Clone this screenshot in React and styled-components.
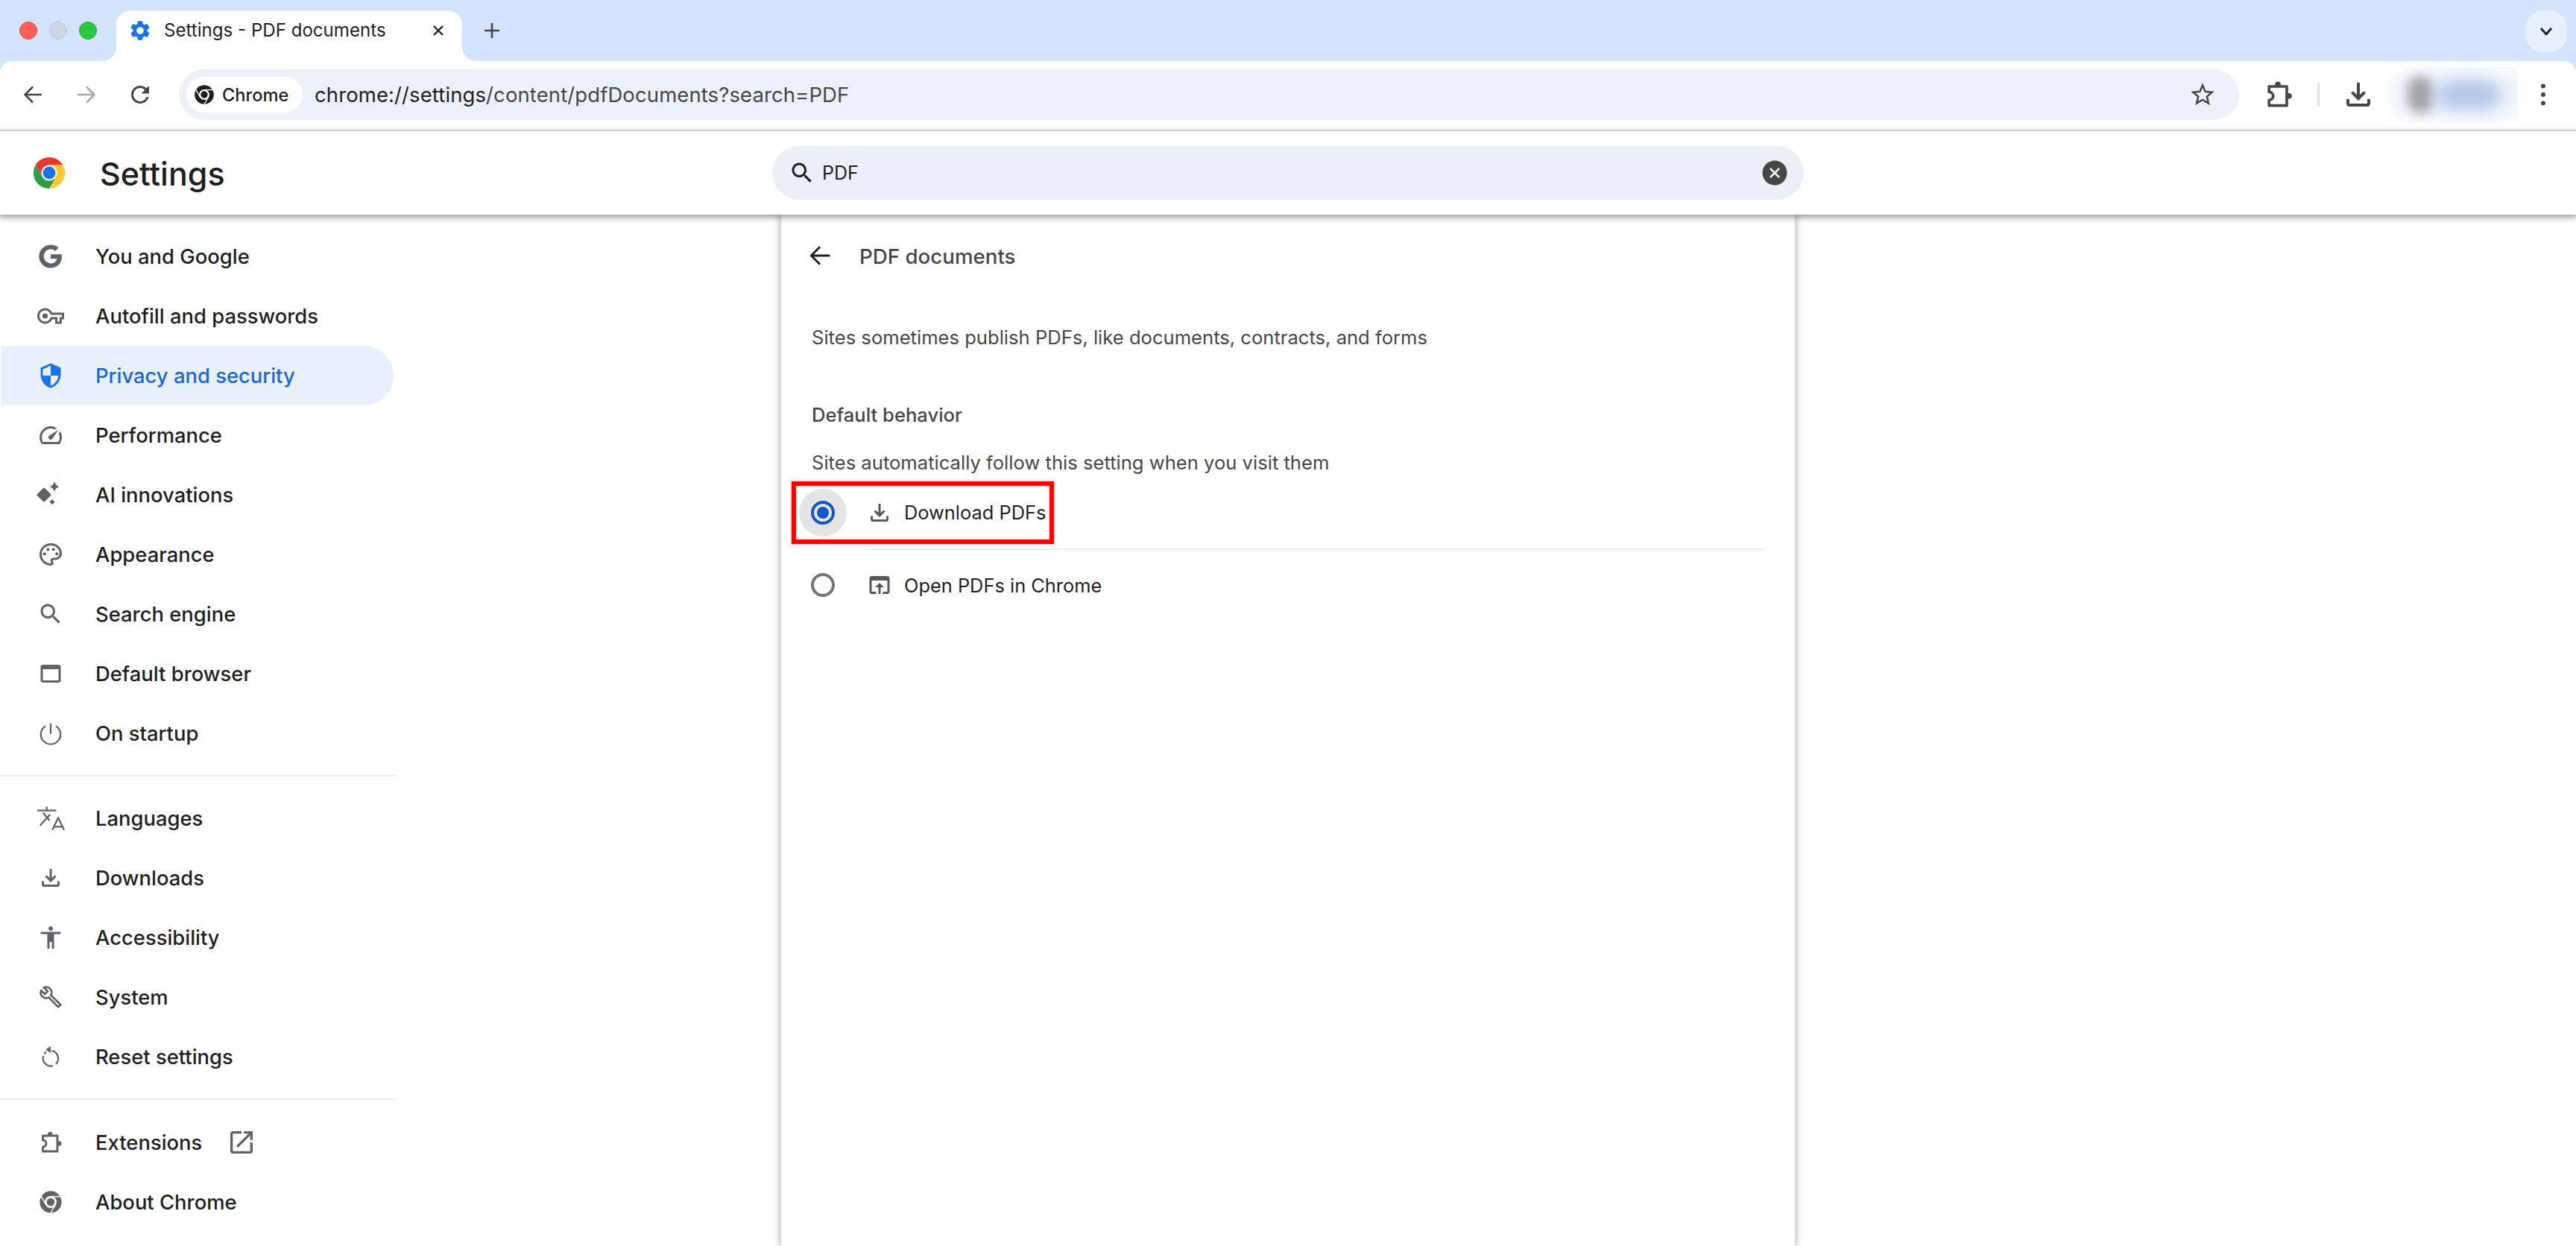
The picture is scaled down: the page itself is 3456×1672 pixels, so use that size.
import React from "react";
import styled, { createGlobalStyle } from "styled-components";

const Global = createGlobalStyle`
  html, body { margin: 0; padding: 0; height: 100%; background: #fff; overflow: hidden; }
  #root { height: 100%; }
  * { box-sizing: border-box; }
`;

const FONT = `Inter, "Liberation Sans", sans-serif`;

const Page = styled.div`
  height: 1672px; display: flex; flex-direction: column; background: #d3e3fd;
  font-family: ${FONT}; color: #1f1f1f; overflow: hidden;
`;
const TabStrip = styled.div`
  height: 82px; flex: none; display: flex; padding-top: 14px;
`;
const Lights = styled.div`
  display: flex; gap: 16px; margin-left: 26px; height: 54px; align-items: center;
`;
const Light = styled.span`
  width: 24px; height: 24px; border-radius: 50%;
  background: ${p => p.$c}; border: 1px solid ${p => p.$b};
`;
const Tab = styled.div`
  position: relative; margin-left: 26px; width: 464px; height: 68px; background: #fff;
  border-radius: 20px 20px 0 0; display: flex; align-items: flex-start; padding: 9px 20px 0 16px; color: #1f1f1f;
  &::before, &::after { content: ""; position: absolute; bottom: 0; width: 20px; height: 20px; }
  &::before { left: -20px; background: radial-gradient(circle at 0 0, transparent 20px, #fff 20.5px); }
  &::after { right: -20px; background: radial-gradient(circle at 100% 0, transparent 20px, #fff 20.5px); }
`;
const TabTitle = styled.span`
  font-size: 24.1px; line-height: 36px; margin-left: 16px; flex: 1; white-space: nowrap;
`;
const TabIconBox = styled.span`
  display: flex; align-items: center; height: 36px; color: ${p => p.$c || "#1f1f1f"};
`;
const NewTab = styled.span`
  margin-left: 22px; width: 36px; height: 54px; display: flex; align-items: center; justify-content: center; color: #474747;
`;
const TabSearch = styled.span`
  margin-left: auto; margin-right: 12px; width: 56px; height: 56px; border-radius: 24px; background: #e9f0fd;
  display: flex; align-items: center; justify-content: center; color: #1f1f1f;
`;
const Toolbar = styled.div`
  height: 94px; flex: none; background: #fff; border-radius: 16px 16px 0 0; border-bottom: 2px solid #e1e1e1;
  display: flex; align-items: center; padding: 0 20px 2px 8px;
`;
const NavBtn = styled.span`
  width: 72px; height: 48px; display: flex; align-items: center; justify-content: center;
  color: ${p => p.$c || "#474747"}; flex: none;
`;
const Omni = styled.div`
  margin-left: 16px; flex: 1; height: 68px; border-radius: 34px; background: #ecf1f9;
  display: flex; align-items: center; padding: 0 25px 0 10px; min-width: 0;
`;
const Chip = styled.div`
  width: 156px; height: 48px; border-radius: 24px; background: #fff; display: flex; align-items: center;
  padding-left: 10px; gap: 10px; font-size: 23.6px; font-weight: 500; color: #1f1f1f; flex: none;
`;
const Url = styled.div`
  margin-left: 16px; flex: 1; font-size: 27.5px; color: #474747; white-space: nowrap; letter-spacing: .1px;
  b { font-weight: 400; color: #1f1f1f; }
`;
const ToolBtn = styled.span`
  width: 48px; height: 48px; display: flex; align-items: center; justify-content: center; color: #474747; flex: none;
  margin-left: ${p => p.$ml || 0}px;
`;
const Sep = styled.span`
  width: 3px; height: 32px; border-radius: 2px; background: #d3e3fd; margin-left: 28px; flex: none;
`;
const Blurred = styled.div`
  width: 174px; height: 74px; margin-left: 16px; flex: none; display: flex; align-items: center; gap: 6px;
  padding-left: 26px; overflow: hidden;
  background: radial-gradient(ellipse at 60% 50%, #e3ecfa 0%, #f3f7fd 60%, #fdfeff 100%);
`;
const BlurFace = styled.span`
  width: 34px; height: 50px; border-radius: 16px; background: #a3a1a5; filter: blur(8px); flex: none;
`;
const BlurName = styled.span`
  width: 84px; height: 38px; border-radius: 18px; background: #b6c9e8; filter: blur(9px); flex: none;
`;
const Header = styled.header`
  height: 112px; flex: none; background: #fff; display: flex; align-items: center; position: relative; z-index: 2;
  box-shadow: 0 3px 8px 1px rgba(0,0,0,.38); padding-left: 43px;
`;
const HeaderTitle = styled.h1`
  margin: 0 0 0 45px; font-size: 43px; font-weight: 500; color: #1f1f1f; width: 902px; flex: none; line-height: 56px;
  padding-top: 2px;
`;
const SearchBox = styled.div`
  width: 1384px; height: 72px; border-radius: 36px; background: #ebeff7; display: flex; align-items: center;
  padding: 0 22px 0 22px; font-size: 25px; color: #1f1f1f; flex: none;
`;
const SearchText = styled.span`
  flex: 1; margin-left: 9px;
`;
const Main = styled.div`
  flex: 1; min-height: 0; display: flex; background: #fff;
`;
const Side = styled.nav`
  width: 532px; flex: none; padding-top: 16px; display: flex; flex-direction: column;
`;
const Item = styled.div`
  height: 80px; width: 526px; margin-left: 2px; padding-left: 48px; display: flex; align-items: center; gap: 42px;
  font-size: 27.4px; font-weight: 500; flex: none;
  color: ${p => (p.$active ? "#1a67d8" : "#1f1f1f")};
  background: ${p => (p.$active ? "#e8effd" : "transparent")};
  border-radius: 0 40px 40px 0;
`;
const ItemIcon = styled.span`
  width: 36px; height: 36px; display: flex; align-items: center; justify-content: center; flex: none;
  color: ${p => (p.$active ? "#1a73e8" : "#5f6368")};
`;
const ExtLink = styled.span`
  display: flex; margin-left: -9px; color: #5f6368;
`;
const SideSep = styled.hr`
  margin: 16px 0 ${p => p.$after}px; border: 0; height: 2px; background: #eeeeee; width: 532px; flex: none;
`;
const Panel = styled.section`
  margin-left: 516px; width: 1360px; flex: none; background: #fff; padding: 15px 40px 0 41px;
  box-shadow: 0 0 10px 1px rgba(0,0,0,.32);
`;
const SubHead = styled.div`
  height: 80px; display: flex; align-items: center; margin-left: -9px; gap: 33px; color: #1f1f1f;
`;
const SubTitle = styled.h2`
  margin: 1px 0 0; font-size: 27.7px; font-weight: 500; color: #474747;
`;
const Line = styled.p`
  margin: ${p => p.$mt}px 0 0; font-size: 25.6px; line-height: 36px; color: #474747;
  font-weight: ${p => p.$w || 400};
`;
const Option = styled.div`
  position: relative; display: flex; height: ${p => p.$h}px; margin-left: -17px;
`;
const Highlight = styled.div`
  position: absolute; left: -10px; top: 7px; width: 352px; height: 84px; border: 6px solid #f00;
  box-shadow: 0 0 4px rgba(0,0,0,.35), inset 0 0 4px rgba(0,0,0,.25); pointer-events: none;
`;
const RadioWrap = styled.span`
  width: 64px; height: ${p => p.$h}px; flex: none; display: flex; align-items: center; justify-content: center;
`;
const Halo = styled.span`
  width: 64px; height: 64px; border-radius: 50%; display: flex; align-items: center; justify-content: center;
  background: ${p => (p.$on ? "#e4e4e4" : "transparent")};
`;
const Radio = styled.span`
  width: 32px; height: 32px; border-radius: 50%; border: 4px solid ${p => (p.$on ? "#1257c7" : "#757575")};
  display: flex; align-items: center; justify-content: center;
  &::after { content: ""; width: 16px; height: 16px; border-radius: 50%; background: ${p => (p.$on ? "#1257c7" : "transparent")}; }
`;
const OptBody = styled.div`
  margin-left: 24px; flex: 1; display: flex; align-items: center; gap: 15px; padding-left: 2px;
  font-size: 25.4px; color: #1f1f1f; border-bottom: ${p => (p.$line ? "2px solid #eeeeee" : "0")};
`;
const OptIcon = styled.span`
  width: 36px; height: 36px; display: flex; align-items: center; justify-content: center; color: #55585c; flex: none;
`;

const Svg = styled.svg`
  width: ${p => p.$s}px; height: ${p => p.$s}px; flex: none; display: block; fill: currentColor; overflow: visible;
`;
const LineSvg = styled(Svg)`
  fill: none; stroke: currentColor; stroke-width: ${p => p.$w || 2}; stroke-linecap: ${p => p.$cap || "butt"}; stroke-linejoin: round;
`;

const P = ({ d, s = 36 }) => <Svg $s={s} viewBox="0 0 24 24"><path d={d} /></Svg>;

const D = {
  gear: "M19.14 12.94c.04-.3.06-.61.06-.94 0-.32-.02-.64-.07-.94l2.03-1.58c.18-.14.23-.41.12-.61l-1.92-3.32c-.12-.22-.37-.29-.59-.22l-2.39.96c-.5-.38-1.03-.7-1.62-.94l-.36-2.54c-.04-.24-.24-.41-.48-.41h-3.84c-.24 0-.43.17-.47.41l-.36 2.54c-.59.24-1.13.57-1.62.94l-2.39-.96c-.22-.08-.47 0-.59.22L2.74 8.87c-.12.21-.08.47.12.61l2.03 1.58c-.05.3-.09.63-.09.94s.02.64.07.94l-2.03 1.58c-.18.14-.23.41-.12.61l1.92 3.32c.12.22.37.29.59.22l2.39-.96c.5.38 1.03.7 1.62.94l.36 2.54c.05.24.24.41.48.41h3.84c.24 0 .44-.17.47-.41l.36-2.54c.59-.24 1.13-.56 1.62-.94l2.39.96c.22.08.47 0 .59-.22l1.92-3.32c.12-.22.07-.47-.12-.61l-2.01-1.58zM12 15.6c-1.98 0-3.6-1.62-3.6-3.6s1.62-3.6 3.6-3.6 3.6 1.62 3.6 3.6-1.62 3.6-3.6 3.6z",
  star: "M22 9.24l-7.19-.62L12 2 9.19 8.63 2 9.24l5.46 4.73L5.82 21 12 17.27 18.18 21l-1.63-7.03L22 9.24zM12 15.4l-3.76 2.27 1-4.28-3.32-2.88 4.38-.38L12 6.1l1.71 4.04 4.38.38-3.32 2.88 1 4.28L12 15.4z",
  reload: "M17.65 6.35C16.2 4.9 14.21 4 12 4c-4.42 0-7.99 3.58-7.99 8s3.57 8 7.99 8c3.73 0 6.84-2.55 7.73-6h-2.08c-.82 2.33-3.04 4-5.65 4-3.31 0-6-2.69-6-6s2.69-6 6-6c1.66 0 3.14.69 4.22 1.78L13 11h7V4l-2.35 2.35z",
  download: "M12 16l-5-5 1.41-1.41L11 12.17V4h2v8.17l2.59-2.58L17 11l-5 5zM6 20c-.55 0-1.02-.2-1.41-.59C4.2 19.02 4 18.55 4 18v-3h2v3h12v-3h2v3c0 .55-.2 1.02-.59 1.41-.39.39-.86.59-1.41.59H6z",
  g: "M22.56 12.25c0-.78-.07-1.53-.2-2.25H12v4.26h5.92c-.26 1.37-1.04 2.53-2.21 3.31v2.77h3.57c2.08-1.92 3.28-4.74 3.28-8.09zM12 23c2.97 0 5.46-.98 7.28-2.66l-3.57-2.77c-.98.66-2.23 1.06-3.71 1.06-2.86 0-5.29-1.93-6.16-4.53H2.18v2.84C3.99 20.53 7.7 23 12 23zM5.84 14.09c-.22-.66-.35-1.36-.35-2.09s.13-1.43.35-2.09V7.07H2.18C1.43 8.55 1 10.22 1 12s.43 3.45 1.18 4.93l2.85-2.22.81-.62zM12 5.38c1.62 0 3.06.56 4.21 1.64l3.15-3.15C17.45 2.09 14.97 1 12 1 7.7 1 3.99 3.47 2.18 7.07l3.66 2.84c.87-2.6 3.3-4.53 6.16-4.53z",
  shield: "M12 1L3 5v6c0 5.55 3.84 10.74 9 12 5.16-1.26 9-6.45 9-12V5l-9-4zm0 10.99h7c-.53 4.12-3.28 7.79-7 8.94V12H5V6.3l7-3.11v8.8z",
  speed: "M20.38 8.57l-1.23 1.85a8 8 0 0 1-.22 7.58H5.07A8 8 0 0 1 15.58 6.85l1.85-1.23A10 10 0 0 0 3.35 19a2 2 0 0 0 1.72 1h13.85a2 2 0 0 0 1.74-1 10 10 0 0 0-.27-10.44zm-9.79 6.84a2 2 0 0 0 2.83 0l5.66-8.49-8.49 5.66a2 2 0 0 0 0 2.83z",
  search: "M15.5 14h-.79l-.28-.27C15.41 12.59 16 11.11 16 9.5 16 5.91 13.09 3 9.5 3S3 5.91 3 9.5 5.91 16 9.5 16c1.61 0 3.09-.59 4.23-1.57l.27.28v.79l5 4.99L20.49 19l-4.99-5zm-6 0C7.01 14 5 11.99 5 9.5S7.01 5 9.5 5 14 7.01 14 9.5 11.99 14 9.5 14z",
  browser: "M19 4H5c-1.11 0-2 .9-2 2v12c0 1.1.89 2 2 2h14c1.1 0 2-.9 2-2V6c0-1.1-.89-2-2-2zm0 14H5V8h14v10z",
  access: "M12 2c1.1 0 2 .9 2 2s-.9 2-2 2-2-.9-2-2 .9-2 2-2zm9 7h-6v13h-2v-6h-2v6H9V9H3V7h18v2z",
  build: "M22.61 18.99l-9.08-9.08c.93-2.34.45-5.1-1.44-7C9.79.61 6.21.4 3.66 2.25L7.5 6.1 6.08 7.5 2.25 3.69C.39 6.23.61 9.82 2.91 12.11c1.86 1.86 4.57 2.35 6.89 1.48l9.11 9.11c.39.39 1.02.39 1.41 0l2.3-2.3c.4-.38.4-1.01-.01-1.41zm-3 1.6l-9.46-9.46c-.61.45-1.29.72-2 .82-1.36.2-2.79-.21-3.83-1.25C3.37 9.76 2.93 8.5 3 7.26l3.09 3.09 4.24-4.24-3.09-3.09c1.24-.07 2.49.37 3.44 1.31 1.08 1.08 1.49 2.57 1.24 3.96-.12.71-.42 1.37-.88 1.96l9.45 9.45-.88.88z",
  external: "M19 19H5V5h7V3H5c-1.11 0-2 .9-2 2v14c0 1.1.89 2 2 2h14c1.1 0 2-.9 2-2v-7h-2v7zM14 3v2h3.59l-9.83 9.83 1.41 1.41L19 6.41V10h2V3h-7z",
  openBrowser: "M19 4H5c-1.11 0-2 .9-2 2v12c0 1.1.89 2 2 2h4v-2H5V8h14v10h-4v2h4c1.1 0 2-.9 2-2V6c0-1.1-.9-2-2-2zm-7 6l-4 4h3v6h2v-6h3l-4-4z",
};

const Arrow = ({ s = 36, flip }) => (
  <LineSvg $s={s} $w={1.7} viewBox="0 0 24 24">
    <path d={flip ? "M4 12h15M12 5l7 7-7 7" : "M20 12H5M12 5l-7 7 7 7"} />
  </LineSvg>
);

const Puzzle = ({ s = 36, w = 2 }) => (
  <Svg $s={s} viewBox="0 0 24 24">
    <circle cx="11.5" cy="4.6" r="2.1" />
    <circle cx="19.6" cy="13" r="2.1" />
    <path d="M5 6H18V20H5V16A3 3 0 0 0 5 10Z" fill="#fff" stroke="currentColor" strokeWidth={w} strokeLinejoin="round" />
  </Svg>
);

const ChromeMono = ({ s = 36 }) => (
  <Svg $s={s} viewBox="0 0 24 24">
    <circle cx="12" cy="12" r="11" />
    <g stroke="#fff" strokeWidth="1.1">
      <path d="M12 6.5H23" />
      <path d="M12 6.5H23" transform="rotate(120 12 12)" />
      <path d="M12 6.5H23" transform="rotate(240 12 12)" />
    </g>
    <circle cx="12" cy="12" r="6" fill="#fff" />
    <circle cx="12" cy="12" r="4" />
  </Svg>
);

const ChromeColor = () => {
  const seg = "M24 13H43.05A22 22 0 0 0 4.95 13L14.47 29.5Z";
  return (
    <Svg $s={46} viewBox="0 0 48 48">
      <path d={seg} fill="#e33b2e" />
      <path d={seg} fill="#fcc934" transform="rotate(120 24 24)" />
      <path d={seg} fill="#2d9b48" transform="rotate(240 24 24)" />
      <circle cx="24" cy="24" r="11" fill="#fff" />
      <circle cx="24" cy="24" r="8.8" fill="#1a73e8" />
    </Svg>
  );
};

const KeyIcon = () => (
  <Svg $s={36} viewBox="0 0 24 24">
    <path d="M22 19h-6v-4h-2.68c-1.14 2.42-3.6 4-6.32 4-3.86 0-7-3.14-7-7s3.14-7 7-7c2.72 0 5.17 1.58 6.32 4H24v6h-2v4zm-4-2h2v-4h2v-2H11.94l-.23-.67C11.01 8.34 9.11 7 7 7c-2.76 0-5 2.24-5 5s2.24 5 5 5c2.11 0 4.01-1.34 4.71-3.33l.23-.67H18v4z" />
    <circle cx="7" cy="12" r="2.4" />
  </Svg>
);

const Sparkle = () => (
  <Svg $s={36} viewBox="0 0 36 36">
    <path d="M9 8.5Q9.6 8.5 10 8.9L18.6 17.5Q19 18 18.6 18.5L10 27.1Q9 27.9 8 27.1L-.6 18.5Q-1 18-.6 17.5L8 8.9Q8.4 8.5 9 8.5Z" />
    <path d="M23 -.5Q24 5.5 29.5 7 24 8.5 23 14.5 22 8.5 16.5 7 22 5.5 23 -.5Z" />
    <path d="M20 24L23.6 27.6 20 31.2 16.4 27.6Z" />
  </Svg>
);

const Palette = () => (
  <Svg $s={36} viewBox="0 0 24 24">
    <path d="M12 22C6.49 22 2 17.51 2 12S6.49 2 12 2s10 4.04 10 9c0 3.31-2.69 6-6 6h-1.77c-.28 0-.5.22-.5.5 0 .12.05.23.13.33.41.47.64 1.06.64 1.67 0 1.38-1.12 2.5-2.5 2.5zm0-18c-4.41 0-8 3.59-8 8s3.59 8 8 8c.28 0 .5-.22.5-.5 0-.16-.08-.28-.14-.35-.41-.46-.63-1.05-.63-1.65 0-1.38 1.12-2.5 2.5-2.5H16c2.21 0 4-1.79 4-4 0-3.86-3.59-7-8-7z" />
    <circle cx="6.5" cy="11.5" r="1.4" /><circle cx="9.5" cy="7.5" r="1.4" />
    <circle cx="14.5" cy="7.5" r="1.4" /><circle cx="17.5" cy="11.5" r="1.4" />
  </Svg>
);

const Power = () => (
  <LineSvg $s={36} $w={1.5} viewBox="0 0 24 24">
    <path d="M12 3v9.5M7.2 5.6A8.8 8.8 0 1 0 16.8 5.6" />
  </LineSvg>
);

const Translate = () => (
  <LineSvg $s={36} $w={1.5} viewBox="0 0 24 24">
    <path d="M0 5H17M8.5 1.5V5M2.5 18.5L11.5 8.5M5 7L11 14M13.5 22.5L18.7 11.5L24 22.5M15 19.5H22.4" />
  </LineSvg>
);

const Restore = () => (
  <Svg $s={36} viewBox="0 0 24 24">
    <path d="M12 6.2V2.5L7.6 5.6 12 8.8Z" />
    <path d="M13 6.6A7.1 7.1 0 0 1 16.6 18.6M14 20.1A7.1 7.1 0 0 1 5.4 11.2M6.4 9.6A7.1 7.1 0 0 1 8 7.6" fill="none" stroke="currentColor" strokeWidth="1.5" />
  </Svg>
);

const BuildIcon = () => <P d={D.build} s={32} />;

const items1 = [
  ["You and Google", <P d={D.g} s={34} />],
  ["Autofill and passwords", <KeyIcon />],
  ["Privacy and security", <P d={D.shield} />, true],
  ["Performance", <P d={D.speed} />],
  ["AI innovations", <Sparkle />],
  ["Appearance", <Palette />],
  ["Search engine", <P d={D.search} />],
  ["Default browser", <P d={D.browser} />],
  ["On startup", <Power />],
];
const items2 = [
  ["Languages", <Translate />],
  ["Downloads", <P d={D.download} />],
  ["Accessibility", <P d={D.access} />],
  ["System", <BuildIcon />],
  ["Reset settings", <Restore />],
];

const NavItem = ({ label, icon, active, children }) => (
  <Item $active={active}>
    <ItemIcon $active={active}>{icon}</ItemIcon>
    <span>{label}</span>
    {children}
  </Item>
);

export default function App() {
  return (
    <Page>
      <Global />
      <TabStrip>
        <Lights>
          <Light $c="#ff5f57" $b="#e0443e" />
          <Light $c="#ced6e4" $b="#bcc5d4" />
          <Light $c="#28c840" $b="#1aab29" />
        </Lights>
        <Tab>
          <TabIconBox $c="#1a73e8"><P d={D.gear} s={32} /></TabIconBox>
          <TabTitle>Settings - PDF documents</TabTitle>
          <TabIconBox>
            <LineSvg $s={24} $w={2.4} viewBox="0 0 24 24"><path d="M6 6l12 12M18 6L6 18" /></LineSvg>
          </TabIconBox>
        </Tab>
        <NewTab>
          <LineSvg $s={24} $w={2.6} viewBox="0 0 24 24"><path d="M12 2v20M2 12h20" /></LineSvg>
        </NewTab>
        <TabSearch>
          <LineSvg $s={24} $w={2.8} viewBox="0 0 24 24"><path d="M5 8l7 8 7-8" /></LineSvg>
        </TabSearch>
      </TabStrip>
      <Toolbar>
        <NavBtn><Arrow /></NavBtn>
        <NavBtn $c="#a8a8a8"><Arrow flip /></NavBtn>
        <NavBtn><P d={D.reload} /></NavBtn>
        <Omni>
          <Chip>
            <ChromeMono s={28} />
            <span>Chrome</span>
          </Chip>
          <Url><b>chrome://settings</b>/content/pdfDocuments?search=PDF</Url>
          <ToolBtn><P d={D.star} s={38} /></ToolBtn>
        </Omni>
        <ToolBtn $ml={29}><Puzzle s={44} /></ToolBtn>
        <Sep />
        <ToolBtn $ml={28}><P d={D.download} s={48} /></ToolBtn>
        <Blurred><BlurFace /><BlurName /></Blurred>
        <ToolBtn $ml={10}>
          <Svg $s={36} viewBox="0 0 36 36"><circle cx="18" cy="6.5" r="3" /><circle cx="18" cy="18" r="3" /><circle cx="18" cy="29.5" r="3" /></Svg>
        </ToolBtn>
      </Toolbar>
      <Header>
        <ChromeColor />
        <HeaderTitle>Settings</HeaderTitle>
        <SearchBox>
          <P d={D.search} />
          <SearchText>PDF</SearchText>
          <Svg $s={34} viewBox="0 0 34 34">
            <circle cx="17" cy="17" r="16.5" fill="#444746" />
            <path d="M11 11l12 12M23 11L11 23" stroke="#ebeff7" strokeWidth="2.6" fill="none" />
          </Svg>
        </SearchBox>
      </Header>
      <Main>
        <Side>
          {items1.map(([l, i, a]) => <NavItem key={l} label={l} icon={i} active={a} />)}
          <SideSep $after={16} />
          {items2.map(([l, i]) => <NavItem key={l} label={l} icon={i} />)}
          <SideSep $after={17} />
          <NavItem label="Extensions" icon={<Puzzle />}>
            <ExtLink><P d={D.external} s={40} /></ExtLink>
          </NavItem>
          <NavItem label="About Chrome" icon={<ChromeMono s={32} />} />
        </Side>
        <Panel>
          <SubHead>
            <Arrow s={40} />
            <SubTitle>PDF documents</SubTitle>
          </SubHead>
          <Line $mt={52}>Sites sometimes publish PDFs, like documents, contracts, and forms</Line>
          <Line $mt={68} $w={500}>Default behavior</Line>
          <Line $mt={28}>Sites automatically follow this setting when you visit them</Line>
          <Option $h={99}>
            <RadioWrap $h={97}><Halo $on><Radio $on /></Halo></RadioWrap>
            <OptBody $line>
              <OptIcon><P d={D.download} /></OptIcon>
              <span>Download PDFs</span>
            </OptBody>
            <Highlight />
          </Option>
          <Option $h={94}>
            <RadioWrap $h={94}><Halo><Radio /></Halo></RadioWrap>
            <OptBody>
              <OptIcon><P d={D.openBrowser} /></OptIcon>
              <span>Open PDFs in Chrome</span>
            </OptBody>
          </Option>
        </Panel>
      </Main>
    </Page>
  );
}
